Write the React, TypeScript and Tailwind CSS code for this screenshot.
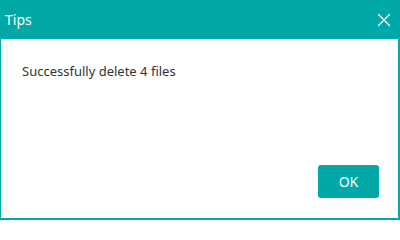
import { X } from 'lucide-react';

export default function App() {
  return (
    <div className="w-[400px] h-[220px] bg-white flex flex-col border-l border-t border-r-2 border-b-2 border-[#00a8a8] font-['Noto_Sans',sans-serif]">
      <div className="h-[39px] bg-[#00a8a8] flex items-center justify-between pl-[5px] pr-[4px] -mx-px -mt-px">
        <span className="text-white text-[14px] leading-none">Tips</span>
        <X className="w-[22px] h-[22px] text-white" strokeWidth={1.4} />
      </div>
      <div className="flex-1 flex flex-col px-[21px]">
        <p className="mt-[22px] text-[13px] text-[#333] leading-5">Successfully delete 4 files</p>
        <div className="mt-auto mb-[20px] flex justify-end -mr-[2px]">
          <button className="w-[61px] h-[33px] rounded-[3px] bg-[#00a8a8] text-white text-[14px]">OK</button>
        </div>
      </div>
    </div>
  );
}
